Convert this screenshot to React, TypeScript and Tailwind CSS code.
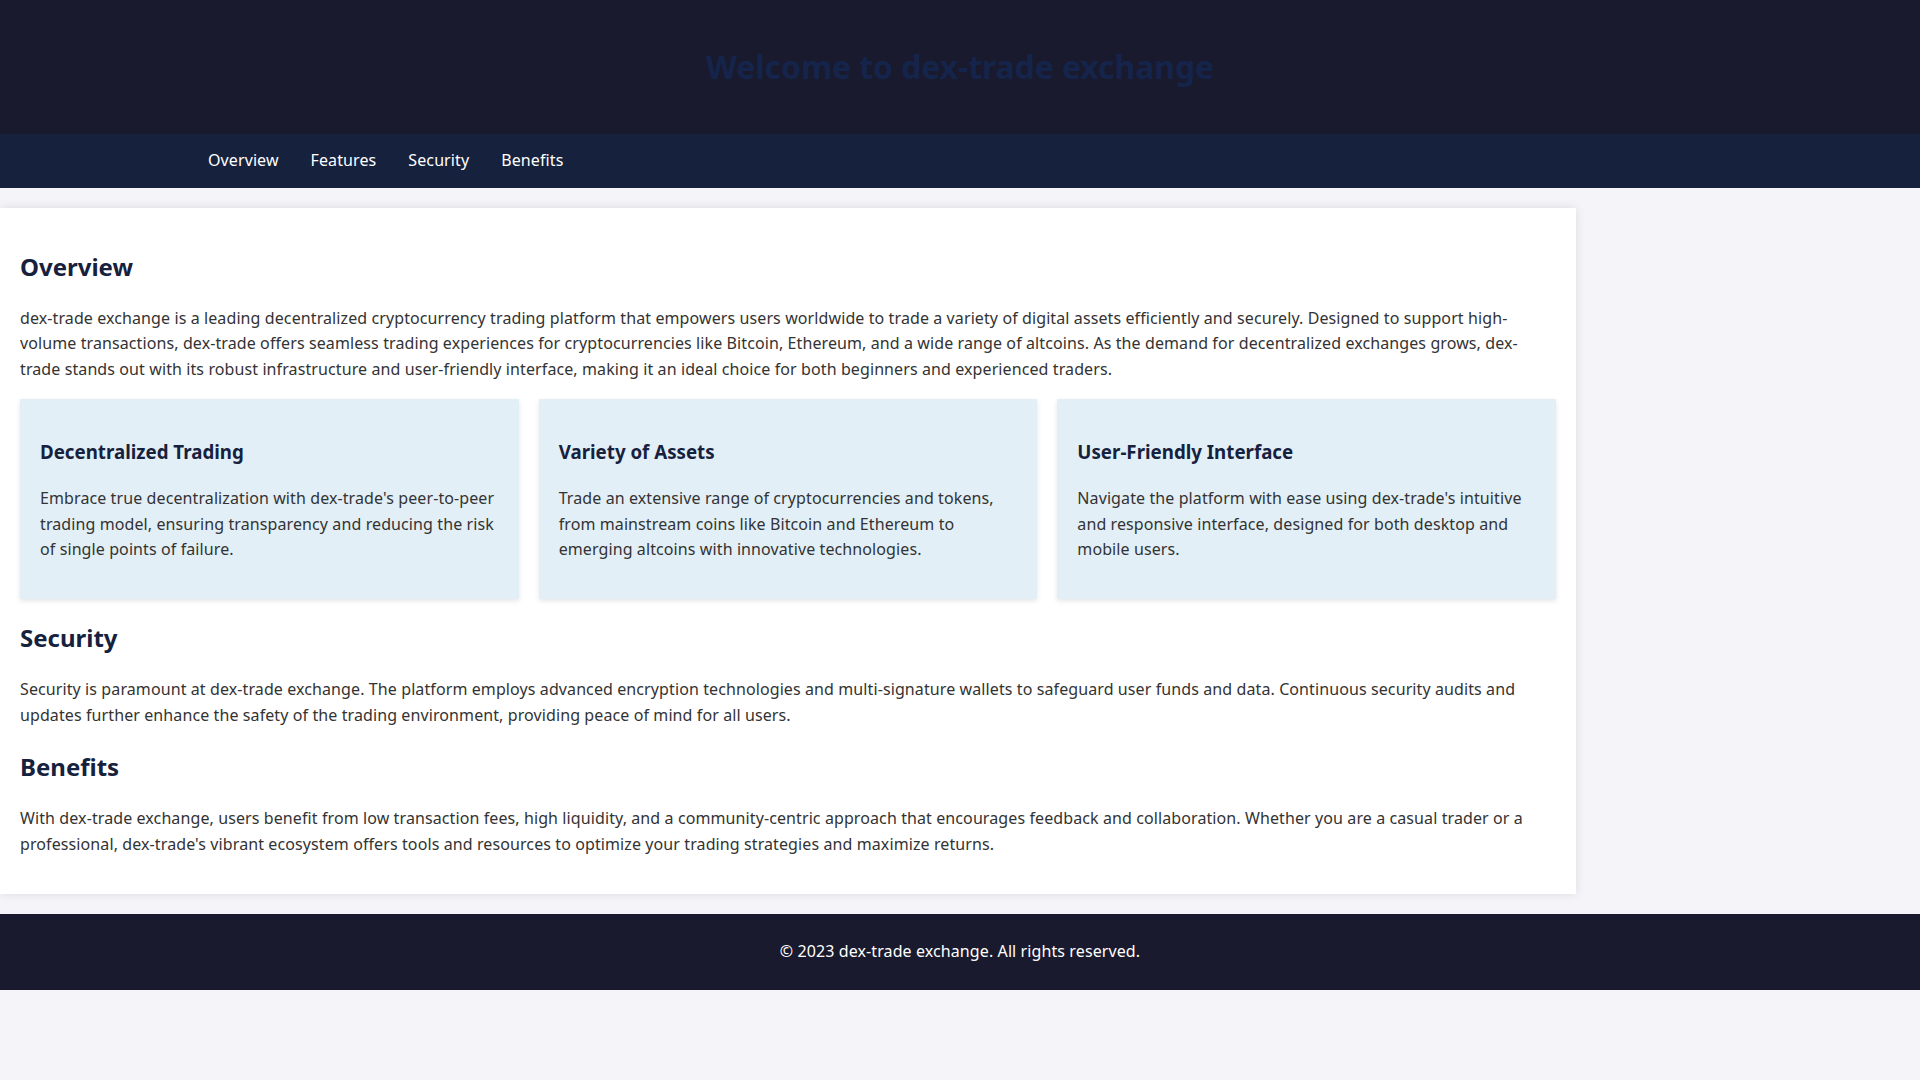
import React from 'react';

const features = [
  {
    title: 'Decentralized Trading',
    text: "Embrace true decentralization with dex-trade's peer-to-peer trading model, ensuring transparency and reducing the risk of single points of failure.",
  },
  {
    title: 'Variety of Assets',
    text: 'Trade an extensive range of cryptocurrencies and tokens, from mainstream coins like Bitcoin and Ethereum to emerging altcoins with innovative technologies.',
  },
  {
    title: 'User-Friendly Interface',
    text: "Navigate the platform with ease using dex-trade's intuitive and responsive interface, designed for both desktop and mobile users.",
  },
];

const App: React.FC = () => {
  return (
    <div className="min-h-screen bg-[#f4f4f9] text-[#333] text-base leading-[1.6] tracking-[0.1px] font-['Noto_Sans',sans-serif]">
      <header className="bg-[#1a1a2e] py-5 text-center">
        <h1 className="my-[21.44px] text-[32px] leading-[1.6] tracking-[-0.1px] font-bold text-[#15244a]">Welcome to dex-trade exchange</h1>
      </header>
      <nav className="bg-[#16213e] py-[14px] pl-[208px]">
        <ul className="flex gap-8 text-white">
          <li><a href="#overview">Overview</a></li>
          <li><a href="#features">Features</a></li>
          <li><a href="#security">Security</a></li>
          <li><a href="#benefits">Benefits</a></li>
        </ul>
      </nav>
      <main className="my-5 w-[1576px] bg-white p-5 shadow-[0_0_10px_rgba(0,0,0,0.1)]">
        <section id="overview">
          <h2 className="my-[19.92px] text-2xl leading-[1.6] tracking-normal font-bold text-[#16213e]">Overview</h2>
          <p className="my-4">
            dex-trade exchange is a leading decentralized cryptocurrency trading platform that empowers users worldwide to trade a variety of digital assets efficiently and securely. Designed to support high-volume transactions, dex-trade offers seamless trading experiences for cryptocurrencies like Bitcoin, Ethereum, and a wide range of altcoins. As the demand for decentralized exchanges grows, dex-trade stands out with its robust infrastructure and user-friendly interface, making it an ideal choice for both beginners and experienced traders.
          </p>
        </section>
        <section id="features" className="grid grid-cols-3 gap-5">
          {features.map((f) => (
            <div key={f.title} className="bg-[#e2eff7] p-5 shadow-[0_2px_5px_rgba(0,0,0,0.1)]">
              <h3 className="my-[18.72px] text-[18.72px] leading-[1.6] tracking-normal font-bold text-[#16213e]">{f.title}</h3>
              <p className="my-4">{f.text}</p>
            </div>
          ))}
        </section>
        <section id="security">
          <h2 className="my-[19.92px] text-2xl leading-[1.6] tracking-normal font-bold text-[#16213e]">Security</h2>
          <p className="my-4">
            Security is paramount at dex-trade exchange. The platform employs advanced encryption technologies and multi-signature wallets to safeguard user funds and data. Continuous security audits and updates further enhance the safety of the trading environment, providing peace of mind for all users.
          </p>
        </section>
        <section id="benefits">
          <h2 className="my-[19.92px] text-2xl leading-[1.6] tracking-normal font-bold text-[#16213e]">Benefits</h2>
          <p className="my-4">
            With dex-trade exchange, users benefit from low transaction fees, high liquidity, and a community-centric approach that encourages feedback and collaboration. Whether you are a casual trader or a professional, dex-trade's vibrant ecosystem offers tools and resources to optimize your trading strategies and maximize returns.
          </p>
        </section>
      </main>
      <footer className="bg-[#1a1a2e] py-[25.6px] text-center text-white">
        <p>© 2023 dex-trade exchange. All rights reserved.</p>
      </footer>
    </div>
  );
};

export default App;
